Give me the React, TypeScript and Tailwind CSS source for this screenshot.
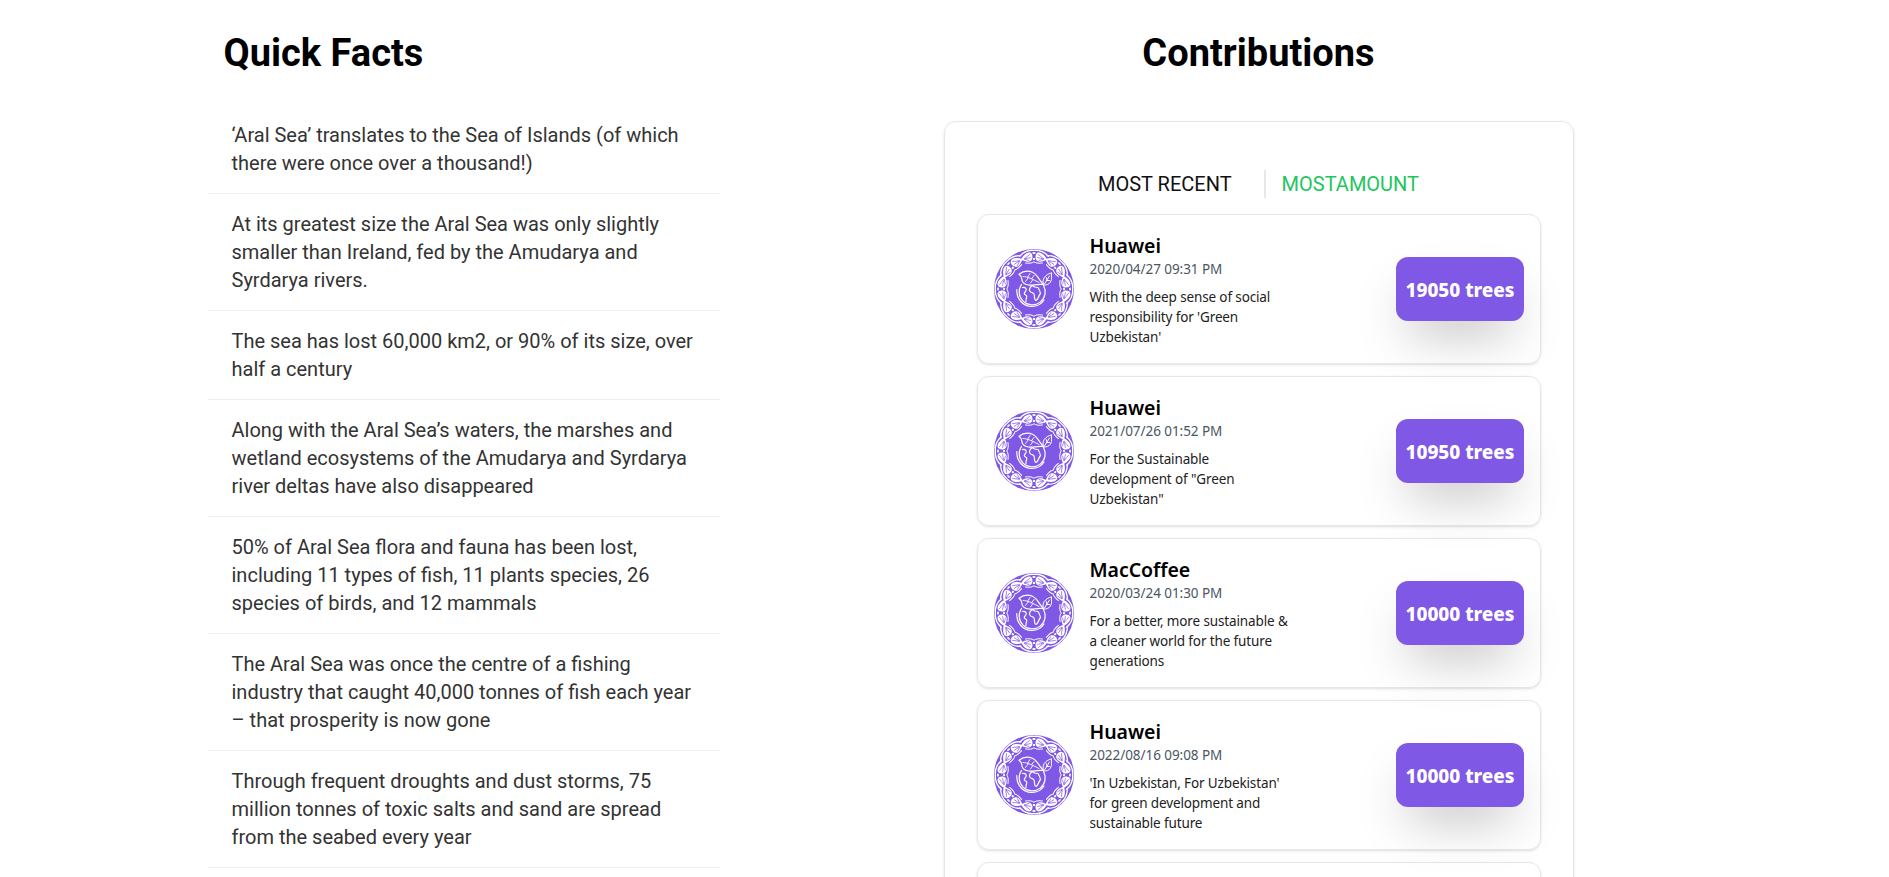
import React from "react";

const facts = [
  "‘Aral Sea’ translates to the Sea of Islands (of which there were once over a thousand!)",
  "At its greatest size the Aral Sea was only slightly smaller than Ireland, fed by the Amudarya and Syrdarya rivers.",
  "The sea has lost 60,000 km2, or 90% of its size, over half a century",
  "Along with the Aral Sea’s waters, the marshes and wetland ecosystems of the Amudarya and Syrdarya river deltas have also disappeared",
  "50% of Aral Sea flora and fauna has been lost, including 11 types of fish, 11 plants species, 26 species of birds, and 12 mammals",
  "The Aral Sea was once the centre of a fishing industry that caught 40,000 tonnes of fish each year – that prosperity is now gone",
  "Through frequent droughts and dust storms, 75 million tonnes of toxic salts and sand are spread from the seabed every year",
];

const contributions = [
  { name: "Huawei", date: "2020/04/27 09:31 PM", lines: ["With the deep sense of social", "responsibility for 'Green", "Uzbekistan'"], trees: 19050 },
  { name: "Huawei", date: "2021/07/26 01:52 PM", lines: ["For the Sustainable", "development of \"Green", "Uzbekistan\""], trees: 10950 },
  { name: "MacCoffee", date: "2020/03/24 01:30 PM", lines: ["For a better, more sustainable &", "a cleaner world for the future", "generations"], trees: 10000 },
  { name: "Huawei", date: "2022/08/16 09:08 PM", lines: ["'In Uzbekistan, For Uzbekistan'", "for green development and", "sustainable future"], trees: 10000 },
];

const segments = [0, 45, 90, 135, 180, 225, 270, 315];

/* Half of a mirrored border motif: a fan leaf with veins and a curl beside it. */
function HalfMotif() {
  return (
    <g strokeLinecap="round">
      <path d="M53 10.500 C49.500 4 44.500 1.800 42.200 5 C40.300 9.200 42.600 13.200 46.800 12.700 C49.500 12.300 51.500 11.500 53 10.500 Z" fill="#fff" />
      <path d="M49.500 9.500 L44.300 5.500 M49.500 9.800 L43.500 8.600 M49.500 10.200 L45 11.500" stroke="#7f58e6" strokeWidth="0.7" />
      <path d="M40.300 1.300 C46.500 0.900 50.500 3 54.300 7.200" fill="none" stroke="#fff" strokeWidth="1.3" />
      <path d="M40.300 13 C42.500 14.500 45 14.400 48.500 14" fill="none" stroke="#fff" strokeWidth="1" />
      <circle cx="40.700" cy="4" r="0.900" fill="#fff" />
      <circle cx="40.300" cy="10" r="0.900" fill="#fff" />
    </g>
  );
}

function Badge() {
  return (
    <svg viewBox="0 0 80 80" className="size-20 shrink-0">
      <circle cx="40" cy="40" r="40" fill="#7f58e6" />
      {segments.map((a) => (
        <g key={a} transform={`rotate(${a} 40 40)`}>
          <HalfMotif />
          <g transform="translate(80 0) scale(-1 1)">
            <HalfMotif />
          </g>
        </g>
      ))}
      <g fill="none" stroke="#fff" strokeWidth="1.2" strokeLinecap="round" strokeLinejoin="round">
        <path d="M27.500 35.500 A13 13 0 1 0 49.500 36.500" />
        <path d="M22.800 40.500 C22.300 50 29 57.300 37.500 57.500 C43 57.600 47.500 55 50 51" />
        <path d="M25 25.300 C29 22 34.500 21.500 38.500 23.200 C43 25.200 44 29.500 49.300 35.500 C43 34.500 39 37 34.500 36 C30.500 35.300 27.800 33 27.800 30 C27.800 28 26.500 26.500 25 25.300 Z" />
        <path d="M29 27.500 C34 27.500 39 30.500 45 33.500 M33.500 28.300 L36 24.500 M37.500 29.800 L40 26.500 M34.500 28.600 L31.500 32.500 M39 30.500 L36.500 34" strokeWidth="0.900" />
        <path d="M49.500 36 C47.500 30 51 25.800 57.500 23.800 C57 27 58.500 29.500 56.500 33 C55 35.500 52 36.300 49.500 36 Z M50.500 35 L55.500 27 M52.300 31.500 L55.500 31.500 M52.800 30.500 L52.200 28.500" strokeWidth="1" />
        <path d="M28.500 38.500 C31.500 38 33.500 40 31.500 42.500 C29.500 44.500 30 45.500 32.500 46.500 C33.500 48.500 31.500 49.500 32 52.500" />
        <path d="M38.500 36.500 C35 38.500 34.500 42 37 43.300 C39.500 44.300 40 43.500 40.300 46 C40.500 49 40.500 51 42 51.500 C44.500 50.500 44.500 46.500 46.500 44.500 C46 42 45 40 44 38.500 L40.500 38 Z" />
      </g>
    </svg>
  );
}

export default function App() {
  return (
    <div className="flex h-[877px] items-start overflow-hidden bg-white pl-52 font-[Roboto,sans-serif] text-black">
      <section className="w-[512px]">
        <h2 className="mb-[29px] ml-[15.5px] mt-[30px] text-[38px] font-bold leading-[46px]">Quick Facts</h2>
        <ul>
          {facts.map((f) => (
            <li key={f} className="border-b border-[#eeeeee] py-4 pl-[23.5px] pr-6 text-[20px] leading-7 text-[#333333]">{f}</li>
          ))}
        </ul>
      </section>
      <section className="ml-56 w-[630px]">
        <h2 className="mb-[45px] mr-px mt-[30px] text-center text-[38px] font-bold leading-[46px]">Contributions</h2>
        <div className="h-[900px] rounded-xl border border-gray-200 px-8 pt-12 shadow">
          <div className="mb-4 mr-px flex h-7 justify-center text-[20px] leading-7">
            <button className="pr-8 text-[#111111]">MOST RECENT</button>
            <button className="border-l-2 border-gray-200 pl-4 text-[#22c55e]">MOSTAMOUNT</button>
          </div>
          {contributions.map((c) => (
            <article key={c.date} className="mb-3 flex h-[150px] items-center rounded-xl border border-gray-200 px-4 font-['Noto_Sans',sans-serif] shadow">
              <Badge />
              <div className="ml-[15.5px] flex-1 whitespace-nowrap">
                <h3 className="pt-px text-[19.5px] font-semibold leading-[27px] tracking-[-0.05px]">{c.name}</h3>
                <p className="text-[13.5px] leading-5 tracking-[-0.05px] text-[#4b5563]">{c.date}</p>
                <p className="mt-2 text-[13.5px] leading-5 tracking-[-0.13px] text-[#222222]">{c.lines.map((l) => <span key={l} className="block">{l}</span>)}</p>
              </div>
              <div className="flex h-16 w-32 items-center justify-center rounded-xl bg-[#7f58e6] pt-0.5 text-[19px] font-extrabold tracking-[-0.05px] text-white shadow-2xl">{c.trees} trees</div>
            </article>
          ))}
          <article className="h-[150px] rounded-xl border border-gray-200 shadow" />
        </div>
      </section>
    </div>
  );
}
